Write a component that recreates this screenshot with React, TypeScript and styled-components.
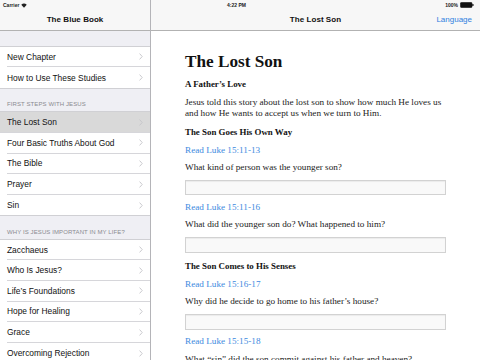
import React from "react";
import styled, { createGlobalStyle } from "styled-components";

const Global = createGlobalStyle`
  html, body { margin: 0; padding: 0; }
  body { width: 480px; height: 360px; overflow: hidden; background: #fff; }
  * { box-sizing: border-box; }
`;

const Screen = styled.div`
  position: relative;
  width: 480px;
  height: 360px;
  display: grid;
  grid-template-columns: 150px 1px 1fr;
  overflow: hidden;
  font-family: "Liberation Sans", Arial, sans-serif;
`;

const Column = styled.div`
  display: flex;
  flex-direction: column;
  min-height: 0;
  overflow: hidden;
`;

const Divider = styled.div`
  background: #b4b4b8;
`;

const NavBar = styled.div`
  height: 30.5px;
  flex: none;
  padding-top: 10px;
  background: #f7f7f7;
  border-bottom: 1px solid #b2b2b2;
  display: grid;
  grid-template-columns: 1fr auto 1fr;
  align-items: center;
  padding-left: 8px;
  padding-right: 8px;
`;

const NavTitle = styled.div`
  grid-column: 2;
  font-size: 8px;
  font-weight: 700;
  color: #111;
  letter-spacing: 0.05px;
`;

const NavButton = styled.div`
  grid-column: 3;
  justify-self: end;
  font-size: 8px;
  color: #2f7fe0;
`;

const StatusBar = styled.div`
  position: absolute;
  left: 0;
  top: 0;
  width: 480px;
  height: 10px;
  display: grid;
  grid-template-columns: 1fr auto 1fr;
  align-items: center;
  padding: 0 6px 0 3px;
  font-size: 5px;
  font-weight: 700;
  color: #222;
`;

const StatusLeft = styled.div`
  display: flex;
  align-items: center;
  gap: 2px;
`;

const StatusRight = styled.div`
  justify-self: end;
  display: flex;
  align-items: center;
  gap: 2px;
`;

const StatusTime = styled.div`
  margin-left: -4px;
`;

const List = styled.div`
  flex: 1;
  background: #efeff4;
  padding-top: 15.4px;
  display: flex;
  flex-direction: column;
`;

const Section = styled.div`
  background: #fff;
  border-top: 1px solid #d0d0d4;
  border-bottom: 1px solid #d0d0d4;
  display: flex;
  flex-direction: column;
`;

const SectionHeader = styled.div`
  height: 22.4px;
  display: flex;
  align-items: flex-end;
  padding: 0 7px 4px;
  font-size: 6px;
  color: #8a8a90;
  letter-spacing: 0.1px;
  text-transform: uppercase;
`;

const Row = styled.div<{ $selected?: boolean; $last?: boolean }>`
  height: 20.6px;
  flex: none;
  display: flex;
  align-items: center;
  margin-left: ${(p) => (p.$selected ? "0" : "7px")};
  padding-left: ${(p) => (p.$selected ? "7px" : "0")};
  padding-right: 7px;
  background: ${(p) => (p.$selected ? "#d9d9d9" : "#fff")};
  border-bottom: ${(p) => (p.$last ? "none" : "0.5px solid #d6d6da")};
  font-size: 8.4px;
  color: #111;
`;

const RowLabel = styled.span`
  flex: 1;
  white-space: nowrap;
`;

const Chevron = () => (
  <svg width="4" height="7" viewBox="0 0 4 7">
    <path d="M0.6 0.6 L3.2 3.5 L0.6 6.4" fill="none" stroke="#c4c4c8" strokeWidth="0.9" />
  </svg>
);

const Content = styled.div`
  flex: 1;
  padding: 21px 34px 0 34px;
  display: flex;
  flex-direction: column;
  gap: 6.5px;
  font-family: "Liberation Serif", "Times New Roman", serif;
  color: #222;
`;

const Title = styled.h1`
  margin: 0 0 1px;
  font-size: 17.2px;
  line-height: 20px;
  font-weight: 700;
  color: #111;
`;

const Heading = styled.h3<{ $spaced?: boolean }>`
  margin: ${(p) => (p.$spaced ? "2px" : "0")} 0 0;
  font-size: 8.9px;
  line-height: 11px;
  font-weight: 700;
  color: #111;
`;

const Para = styled.p`
  margin: 0;
  font-size: 9.2px;
  line-height: 11px;
  white-space: nowrap;
`;

const Body = styled.p`
  margin: 0;
  font-size: 9.2px;
  line-height: 11px;
`;

const Link = styled.div`
  font-size: 9.2px;
  line-height: 11px;
  color: #3d8ae0;
`;

const Answer = styled.div<{ $h?: number }>`
  height: ${(p) => p.$h ?? 15.5}px;
  flex: none;
  border: 1px solid #d2d2d2;
  background: #f9f9f9;
  box-shadow: inset 0 1px 1px rgba(0, 0, 0, 0.06);
`;

const Wifi = () => (
  <svg width="6" height="5" viewBox="0 0 12 10">
    <path d="M6 9.5 L0.5 3.5 A8 8 0 0 1 11.5 3.5 Z" fill="#222" />
  </svg>
);

const Battery = () => (
  <svg width="14" height="6" viewBox="0 0 14 6">
    <rect x="0.5" y="0.5" width="11.5" height="5" rx="0.8" fill="#111" stroke="#111" strokeWidth="0.6" />
    <rect x="12.3" y="2" width="1.2" height="2" fill="#111" />
  </svg>
);

const section1 = ["New Chapter", "How to Use These Studies"];
const section2 = ["The Lost Son", "Four Basic Truths About God", "The Bible", "Prayer", "Sin"];
const section3 = [
  "Zacchaeus",
  "Who Is Jesus?",
  "Life\u2019s Foundations",
  "Hope for Healing",
  "Grace",
  "Overcoming Rejection",
];

const renderRows = (items: string[], selected?: string) =>
  items.map((t, i) => (
    <Row key={t} $selected={t === selected} $last={i === items.length - 1}>
      <RowLabel>{t}</RowLabel>
      <Chevron />
    </Row>
  ));

export default function App() {
  return (
    <>
      <Global />
      <Screen>
        <Column>
          <NavBar>
            <NavTitle>The Blue Book</NavTitle>
          </NavBar>
          <List>
            <Section>{renderRows(section1)}</Section>
            <SectionHeader>First Steps with Jesus</SectionHeader>
            <Section>{renderRows(section2, "The Lost Son")}</Section>
            <SectionHeader>Why is Jesus important in my life?</SectionHeader>
            <Section>{renderRows(section3)}</Section>
          </List>
        </Column>
        <Divider />
        <Column>
          <NavBar>
            <NavTitle>The Lost Son</NavTitle>
            <NavButton>Language</NavButton>
          </NavBar>
          <Content>
            <Title>The Lost Son</Title>
            <Heading>A Father&rsquo;s Love</Heading>
            <Body>
              Jesus told this story about the lost son to show how much He loves us and how He wants to
              accept us when we turn to Him.
            </Body>
            <Heading $spaced>The Son Goes His Own Way</Heading>
            <Link>Read Luke 15:11-13</Link>
            <Para>What kind of person was the younger son?</Para>
            <Answer />
            <Link>Read Luke 15:11-16</Link>
            <Para>What did the younger son do? What happened to him?</Para>
            <Answer $h={16} />
            <Heading $spaced>The Son Comes to His Senses</Heading>
            <Link>Read Luke 15:16-17</Link>
            <Para>Why did he decide to go home to his father&rsquo;s house?</Para>
            <Answer $h={16} />
            <Link>Read Luke 15:15-18</Link>
            <Para>What &ldquo;sin&rdquo; did the son commit against his father and heaven?</Para>
          </Content>
        </Column>
        <StatusBar>
          <StatusLeft>
            <span>Carrier</span>
            <Wifi />
          </StatusLeft>
          <StatusTime>4:22 PM</StatusTime>
          <StatusRight>
            <span>100%</span>
            <Battery />
          </StatusRight>
        </StatusBar>
      </Screen>
    </>
  );
}
